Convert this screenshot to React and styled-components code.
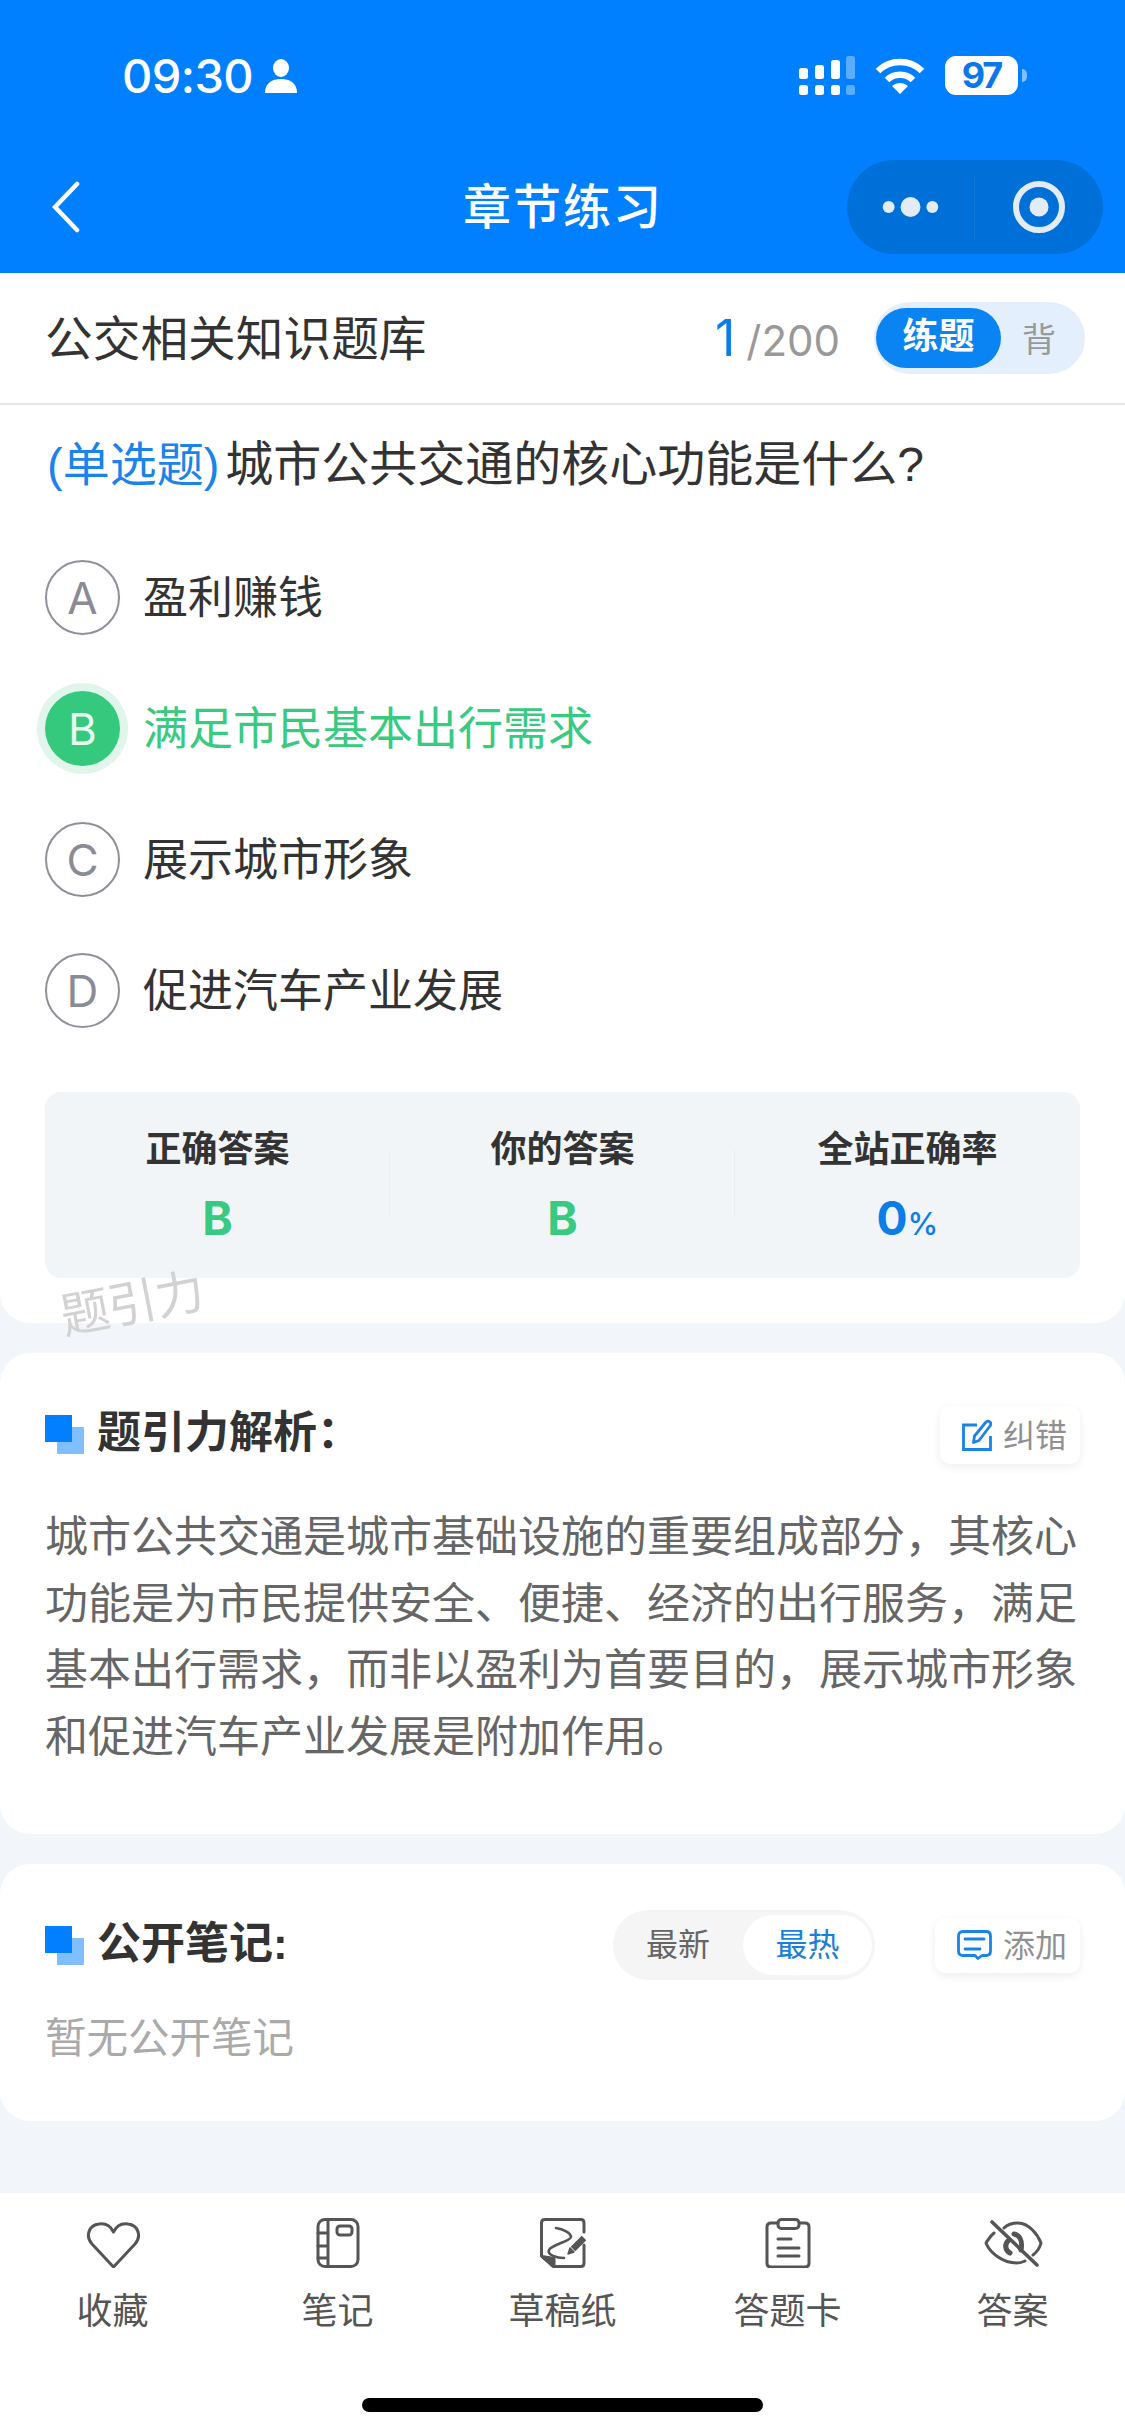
import React from "react";
import styled, { createGlobalStyle } from "styled-components";

const BLUE = "#0080ff";
const GREEN = "#38ca80";
const CJK = `"Liberation Sans", "Noto Sans CJK SC", sans-serif`;

// full-width punctuation
const COMMA = "\uFF0C";
const COLON = "\uFF1A";

const GlobalStyle = createGlobalStyle`
  html, body {
    margin: 0;
    padding: 0;
    background: #f2f5f9;
    font-family: ${CJK};
  }
  * {
    box-sizing: border-box;
  }
`;

const Page = styled.div`
  width: 1125px;
  height: 2436px;
  display: flex;
  flex-direction: column;
  overflow: hidden;
  background: #f2f5f9;
`;

const Header = styled.header`
  height: 273px;
  background: ${BLUE};
  color: #fff;
`;

const StatusBar = styled.div`
  height: 154px;
  padding: 0 107px 3px 122px;
  display: flex;
  align-items: center;
  justify-content: space-between;
`;

const StatusLeft = styled.div`
  display: flex;
  align-items: center;
  gap: 12px;
`;

const Clock = styled.span`
  font-size: 47px;
  font-weight: 500;
  font-family: Inter, sans-serif;
  letter-spacing: -0.6px;
`;

const StatusRight = styled.div`
  display: flex;
  align-items: center;
  gap: 20px;
`;

const Battery = styled.div`
  position: relative;
  width: 73px;
  height: 39px;
  border-radius: 11px;
  background: #fff;
  color: #0a78ea;
  font: 700 36px/39px Inter, sans-serif;
  letter-spacing: -2px;
  text-align: center;

  &::after {
    content: "";
    position: absolute;
    right: -9px;
    top: 13px;
    width: 5px;
    height: 13px;
    border-radius: 0 6px 6px 0;
    background: rgba(255, 255, 255, 0.5);
  }
`;

const NavBar = styled.div`
  height: 119px;
  padding: 6px 22px 19px 52px;
  display: grid;
  grid-template-columns: 411px auto 1fr;
  align-items: center;
`;

const NavTitle = styled.h1`
  margin: 0;
  padding-top: 2px;
  font-size: 48px;
  font-weight: 500;
  letter-spacing: 2px;
  line-height: 60px;
`;

const Capsule = styled.div`
  justify-self: end;
  width: 256px;
  height: 94px;
  border-radius: 47px;
  background: #0070d9;
  display: grid;
  grid-template-columns: 128px 1fr;
  align-items: center;
  justify-items: center;

  & > svg:first-child {
    border-right: 1px solid #1278d6;
  }
`;

const QuizCard = styled.section`
  position: relative;
  padding-bottom: 45px;
  background: #fff;
  border-radius: 0 0 30px 30px;
`;

const SubHeader = styled.div`
  height: 132px;
  padding: 0 40px 0 45px;
  display: flex;
  align-items: center;
  border-bottom: 2px solid #e6e6e6;
`;

const BankName = styled.div`
  flex: 1;
  padding-bottom: 6px;
  font-size: 47.7px;
  color: #333;
`;

const Progress = styled.div`
  font-family: Inter, sans-serif;
  font-size: 42px;
  color: #999;
  margin-right: 34px;
  display: flex;
  align-items: baseline;
  gap: 11px;
`;

const ProgressNow = styled.span`
  font-size: 50px;
  color: #0a7de8;
`;

const ModeToggle = styled.div`
  width: 211px;
  height: 72px;
  padding: 6px 0 6px 2px;
  border-radius: 36px;
  background: #e3effc;
  display: flex;
  align-items: center;
`;

const ModeActive = styled.span`
  width: 125px;
  height: 60px;
  border-radius: 30px;
  background: #0a84f2;
  color: #fff;
  font-size: 36px;
  font-weight: 700;
  line-height: 58px;
  text-align: center;
`;

const ModeIdle = styled.span`
  flex: 1;
  padding: 0 8px 2px 0;
  color: #999;
  font-size: 34px;
  text-align: center;
`;

const Question = styled.div`
  height: 112px;
  padding: 0 47px;
  font-size: 48px;
  line-height: 120px;
  color: #333;
`;

const QuestionType = styled.span`
  margin-right: 6px;
  font-size: 47px;
  color: #1a84ea;
`;

const Options = styled.div`
  margin-top: 15px;
`;

const OptionRow = styled.div`
  height: 131px;
  padding-left: 45px;
  display: flex;
  align-items: center;
  gap: 23px;
  font-size: 45px;
  color: ${(p) => (p.$picked ? GREEN : "#333")};
`;

const OptionText = styled.span`
  padding-bottom: 6px;
`;

const OptionMark = styled.span`
  width: 75px;
  height: 75px;
  border-radius: 50%;
  display: flex;
  align-items: center;
  justify-content: center;
  font-family: Inter, sans-serif;
  font-size: 44px;
  color: ${(p) => (p.$picked ? "#e8fbf1" : "#8b8b96")};
  background: ${(p) => (p.$picked ? "#35c97e" : "transparent")};
  border: ${(p) => (p.$picked ? "none" : "2.5px solid #8f8f99")};
  box-shadow: ${(p) => (p.$picked ? "0 0 0 8px #e0f6ea" : "none")};
`;

const Stats = styled.div`
  margin: 36px 45px 0;
  height: 186px;
  border-radius: 16px;
  background: #f2f5f8;
  display: grid;
  grid-template-columns: repeat(3, 1fr);
`;

const StatItem = styled.div`
  position: relative;
  padding-top: 34px;
  text-align: center;

  &:not(:last-child)::after {
    content: "";
    position: absolute;
    right: 0;
    top: 58px;
    width: 1px;
    height: 66px;
    background: #eaeef2;
  }
`;

const StatLabel = styled.div`
  font-size: 36px;
  font-weight: 700;
  line-height: 48px;
  color: #333;
`;

const StatValue = styled.div`
  margin-top: 14px;
  font-family: Inter, sans-serif;
  font-size: 46px;
  font-weight: 700;
  line-height: 60px;
  color: ${(p) => p.$color};
`;

const StatUnit = styled.span`
  font-size: 31px;
  font-weight: 500;
`;

const Watermark = styled.div`
  position: absolute;
  left: 59px;
  top: 991px;
  font-size: 49px;
  color: #d2d2d2;
  transform: rotate(-11deg);
  letter-spacing: -1px;
`;

const Panel = styled.section`
  margin-top: 30px;
  padding: ${(p) => p.$padding};
  background: #fff;
  border-radius: 30px;
`;

const PanelHead = styled.div`
  height: ${(p) => p.$height}px;
  display: flex;
  align-items: center;
`;

const Bullet = styled.span`
  position: relative;
  width: 39px;
  height: 39px;
  margin-right: 13px;
  flex: none;

  &::before,
  &::after {
    content: "";
    position: absolute;
    width: 27px;
    height: 27px;
  }
  &::before {
    right: 0;
    bottom: 0;
    background: #80bfff;
  }
  &::after {
    left: 0;
    top: 0;
    background: ${BLUE};
  }
`;

const PanelTitle = styled.h2`
  flex: 1;
  margin: 0;
  padding-bottom: 11px;
  font-size: 44px;
  font-weight: 700;
  color: #333;
`;

const ActionButton = styled.div`
  height: ${(p) => p.$height}px;
  padding: 0 13px 0 22px;
  display: flex;
  align-items: center;
  gap: 11px;
  border-radius: 10px;
  background: #fff;
  box-shadow: 0 3px 10px rgba(0, 0, 0, 0.07);
  color: #909090;
  font-size: 32px;
`;

const ActionLabel = styled.span`
  padding-bottom: 4px;
`;

const Segment = styled.div`
  width: 262px;
  height: 70px;
  margin-right: 60px;
  padding: 5px 3px 5px 0;
  display: flex;
  align-items: center;
  border-radius: 35px;
  background: #f5f5f5;
  font-size: 32px;
`;

const SegmentItem = styled.span`
  flex: ${(p) => (p.$on ? "0 0 129px" : "1")};
  height: 60px;
  line-height: 60px;
  text-align: center;
  border-radius: 30px;
  color: ${(p) => (p.$on ? "#1a7fd8" : "#666")};
  background: ${(p) => (p.$on ? "#fff" : "transparent")};
`;

const PanelText = styled.p`
  margin: 42px 0 0;
  font-size: 43px;
  line-height: 66.5px;
  color: #666;
`;

const EmptyNote = styled.div`
  margin-top: 29px;
  font-size: 41.5px;
  line-height: 60px;
  color: #aaa;
`;

const Footer = styled.footer`
  margin-top: auto;
  height: 243px;
  background: #fff;
  display: flex;
  flex-direction: column;
  align-items: center;
`;

const Tabs = styled.nav`
  width: 100%;
  padding-top: 25px;
  display: grid;
  grid-template-columns: repeat(5, 1fr);
`;

const Tab = styled.div`
  display: flex;
  flex-direction: column;
  align-items: center;
  gap: 19px;
  font-size: 36px;
  line-height: 50px;
  color: #555;
`;

const HomeBar = styled.div`
  width: 401px;
  height: 14px;
  margin-top: 61px;
  border-radius: 7px;
  background: #000;
`;

const TabIcon = styled.svg.attrs({
  viewBox: "0 0 60 50",
  width: 60,
  height: 50,
  fill: "none",
  stroke: "#555",
  strokeWidth: 3,
  strokeLinecap: "round",
  strokeLinejoin: "round",
})``;

const SignalIcon = () => (
  <svg width="56" height="39" viewBox="0 0 56 39" fill="#fff">
    <rect x="0" y="12" width="9" height="11" rx="2.5" />
    <rect x="16" y="9" width="9" height="14" rx="2.5" />
    <rect x="32" y="4" width="9" height="19" rx="2.5" />
    <rect x="47" y="0" width="9" height="23" rx="2.5" opacity="0.35" />
    <rect x="0" y="29" width="9" height="10" rx="2.5" />
    <rect x="16" y="29" width="9" height="10" rx="2.5" />
    <rect x="32" y="29" width="9" height="10" rx="2.5" />
    <rect x="47" y="29" width="9" height="10" rx="2.5" opacity="0.35" />
  </svg>
);

const WifiIcon = () => (
  <svg width="50" height="36" viewBox="0 0 50 36" fill="none" stroke="#fff" strokeWidth="6.5">
    <path d="M3 13 C15 1 35 1 47 13" />
    <path d="M12 22 C19 15 31 15 38 22" />
    <path d="M25 36 L17 28 C22 24 28 24 33 28 Z" fill="#fff" stroke="none" />
  </svg>
);

const PersonIcon = () => (
  <svg width="32" height="34" viewBox="0 0 32 34" fill="#fff">
    <ellipse cx="16" cy="9" rx="8" ry="9" />
    <path d="M0 34 C0 24 7 20 16 20 C25 20 32 24 32 34 Z" />
  </svg>
);

const BackIcon = () => (
  <svg width="28" height="52" viewBox="0 0 28 52" fill="none" stroke="#fff" strokeWidth="4.5" strokeLinecap="round">
    <path d="M25 3 L3 26 L25 49" />
  </svg>
);

const DotsIcon = () => (
  <svg width="128" height="64" viewBox="0 0 128 64" fill="#e2ebf6">
    <circle cx="42" cy="32" r="6" />
    <circle cx="64" cy="32" r="10" />
    <circle cx="86" cy="32" r="6" />
  </svg>
);

const RingIcon = () => (
  <svg width="52" height="52" viewBox="0 0 52 52">
    <circle cx="26" cy="26" r="23" fill="none" stroke="#e2ebf6" strokeWidth="6" />
    <circle cx="26" cy="26" r="9.5" fill="#e2ebf6" />
  </svg>
);

const EditIcon = () => (
  <svg width="30" height="32" viewBox="0 0 30 32" fill="none" stroke="#1a84e6" strokeWidth="2.8">
    <path d="M15 6 H1.5 V30.500 H28.500 V17" />
    <path d="M11.500 23.500 L12.500 17 L24 3 Q26 1.200 28 3 Q29.800 5 28 7 L17 21.500 Z" strokeLinejoin="round" />
  </svg>
);

const NoteIcon = () => (
  <svg width="35" height="30" viewBox="0 0 35 30" fill="none" stroke="#1a84e6" strokeWidth="2.8" strokeLinecap="round" strokeLinejoin="round">
    <path d="M6 1.500 H29 Q33.500 1.500 33.500 6 V21 Q33.500 25.500 29 25.500 H25 L21 28.500 L18 25.500 H6 Q1.500 25.500 1.500 21 V6 Q1.500 1.500 6 1.500 Z" />
    <path d="M8 9 H27 M8 19 H23" />
  </svg>
);

const HeartIcon = () => (
  <TabIcon>
    <path d="M30.5 49 L9 26 C2 18 6 7 16 6 C23 5 28 9 30.5 14 C33 9 38 5 45 6 C55 7 59 18 52 26 Z" />
  </TabIcon>
);

const NotebookIcon = () => (
  <TabIcon>
    <rect x="10" y="1.5" width="40" height="47" rx="7" />
    <path d="M20 2 V48 M10 15 H20 M10 28 H20 M10 40 H20" />
    <rect x="29" y="8" width="15" height="9" rx="3" />
  </TabIcon>
);

const DraftIcon = () => (
  <TabIcon>
    <path d="M51 14 V5 Q51 1.500 48 1.500 H12 Q8.500 1.500 8.500 5 V38 L20 48.500 H48 Q51 48.500 51 45 V27" />
    <path d="M9 38.500 L21 40.500 V48 Z" fill="#555" />
    <path d="M23 10 C30 11 38 15 38 19 C38 23 18 27 16 32 C14 37 24 40 31 40" strokeWidth="2.600" />
    <path d="M51 20 L40 31" strokeWidth="6.500" strokeLinecap="butt" />
    <path d="M37 30 L35 36 L41 34 Z" fill="#555" strokeWidth="1.500" />
  </TabIcon>
);

const ClipboardIcon = () => (
  <TabIcon>
    <path d="M20 5 H13 Q9 5 9 9 V45 Q9 49 13 49 H47 Q51 49 51 45 V9 Q51 5 47 5 H42" />
    <rect x="20" y="1.500" width="21" height="9" rx="3.500" />
    <path d="M20 21 H33 M20 30 H41 M20 38 H41" />
  </TabIcon>
);

const EyeOffIcon = () => (
  <TabIcon>
    <path d="M21 10 C25 6 30 5 35 5 C46 5 55 17 58 25 C57 29 54 34 50 37" />
    <path d="M11 15 C7 18 5 22 3 25 C6 33 18 45 34 45 C37 45 40 44 42 43" />
    <path d="M26 22 C21 26 22 32 27 35" strokeWidth="5" />
    <path d="M31 16 C36 17 40 22 38 32" strokeWidth="5" />
    <path d="M9 4 L54 47" strokeWidth="3.600" />
  </TabIcon>
);

const options = [
  { key: "A", text: "盈利赚钱" },
  { key: "B", text: "满足市民基本出行需求", picked: true },
  { key: "C", text: "展示城市形象" },
  { key: "D", text: "促进汽车产业发展" },
];

const tabs = [
  { label: "收藏", icon: <HeartIcon /> },
  { label: "笔记", icon: <NotebookIcon /> },
  { label: "草稿纸", icon: <DraftIcon /> },
  { label: "答题卡", icon: <ClipboardIcon /> },
  { label: "答案", icon: <EyeOffIcon /> },
];

const analysis = [
  "城市公共交通是城市基础设施的重要组成部分",
  "其核心功能是为市民提供安全、便捷、经济的出行服务",
  "满足基本出行需求",
  "而非以盈利为首要目的",
  "展示城市形象和促进汽车产业发展是附加作用。",
].join(COMMA);

const App = () => {
  return (
    <Page>
      <GlobalStyle />
      <Header>
        <StatusBar>
          <StatusLeft>
            <Clock>09:30</Clock>
            <PersonIcon />
          </StatusLeft>
          <StatusRight>
            <SignalIcon />
            <WifiIcon />
            <Battery>97</Battery>
          </StatusRight>
        </StatusBar>
        <NavBar>
          <BackIcon />
          <NavTitle>章节练习</NavTitle>
          <Capsule>
            <DotsIcon />
            <RingIcon />
          </Capsule>
        </NavBar>
      </Header>

      <QuizCard>
        <SubHeader>
          <BankName>公交相关知识题库</BankName>
          <Progress>
            <ProgressNow>1</ProgressNow>
            <span>/200</span>
          </Progress>
          <ModeToggle>
            <ModeActive>练题</ModeActive>
            <ModeIdle>背</ModeIdle>
          </ModeToggle>
        </SubHeader>
        <Question>
          <QuestionType>(单选题)</QuestionType>城市公共交通的核心功能是什么?
        </Question>
        <Options>
          {options.map((o) => (
            <OptionRow key={o.key} $picked={o.picked}>
              <OptionMark $picked={o.picked}>{o.key}</OptionMark>
              <OptionText>{o.text}</OptionText>
            </OptionRow>
          ))}
        </Options>
        <Stats>
          <StatItem>
            <StatLabel>正确答案</StatLabel>
            <StatValue $color={GREEN}>B</StatValue>
          </StatItem>
          <StatItem>
            <StatLabel>你的答案</StatLabel>
            <StatValue $color={GREEN}>B</StatValue>
          </StatItem>
          <StatItem>
            <StatLabel>全站正确率</StatLabel>
            <StatValue $color="#0a7de8">
              0<StatUnit>%</StatUnit>
            </StatValue>
          </StatItem>
        </Stats>
        <Watermark>题引力</Watermark>
      </QuizCard>

      <Panel $padding="54px 45px 64px">
        <PanelHead $height={55}>
          <Bullet />
          <PanelTitle>题引力解析{COLON}</PanelTitle>
          <ActionButton $height={58}>
            <EditIcon />
            <ActionLabel>纠错</ActionLabel>
          </ActionButton>
        </PanelHead>
        <PanelText>{analysis}</PanelText>
      </Panel>

      <Panel $padding="46px 45px 52px">
        <PanelHead $height={70}>
          <Bullet />
          <PanelTitle>公开笔记:</PanelTitle>
          <Segment>
            <SegmentItem>最新</SegmentItem>
            <SegmentItem $on>最热</SegmentItem>
          </Segment>
          <ActionButton $height={55}>
            <NoteIcon />
            <ActionLabel>添加</ActionLabel>
          </ActionButton>
        </PanelHead>
        <EmptyNote>暂无公开笔记</EmptyNote>
      </Panel>

      <Footer>
        <Tabs>
          {tabs.map((t) => (
            <Tab key={t.label}>
              {t.icon}
              {t.label}
            </Tab>
          ))}
        </Tabs>
        <HomeBar />
      </Footer>
    </Page>
  );
};

export default App;
